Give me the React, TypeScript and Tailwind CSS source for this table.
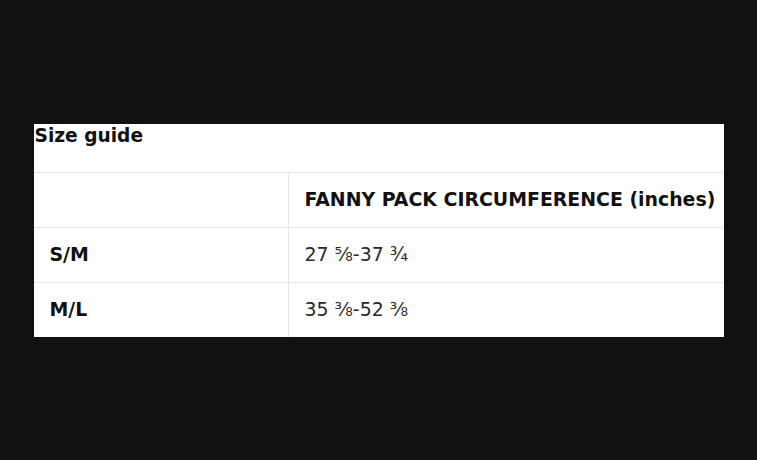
import React from "react";

const font = { fontFamily: '"DejaVu Sans", Verdana, sans-serif' };

export default function App() {
  const rows = [
    { size: "S/M", value: "27 ⅝-37 ¾" },
    { size: "M/L", value: "35 ⅜-52 ⅜" },
  ];
  return (
    <div className="w-[757px] h-[460px] bg-[#111111] flex items-center justify-center" style={font}>
      <div className="w-[690px] bg-white">
        <div className="h-[48px] pl-[1px] text-[18.6px] leading-[24px] font-bold text-[#111111]">Size guide</div>
        <div className="grid grid-cols-[254px_1fr]">
          <div className="h-[55px] border-t border-[#e6e6e6]" />
          <div className="h-[55px] border-t border-l border-[#e6e6e6] flex items-center pl-[16px] text-[18.9px] font-bold text-[#111111] whitespace-nowrap">
            FANNY PACK CIRCUMFERENCE (inches)
          </div>
          {rows.map((r) => (
            <React.Fragment key={r.size}>
              <div className="h-[55px] border-t border-[#e6e6e6] flex items-center pl-[16px] text-[18.9px] font-bold text-[#111111]">
                {r.size}
              </div>
              <div className="h-[55px] border-t border-l border-[#e6e6e6] flex items-center pl-[16px] text-[18.9px] text-[#2a2a2a]">
                {r.value}
              </div>
            </React.Fragment>
          ))}
        </div>
      </div>
    </div>
  );
}
